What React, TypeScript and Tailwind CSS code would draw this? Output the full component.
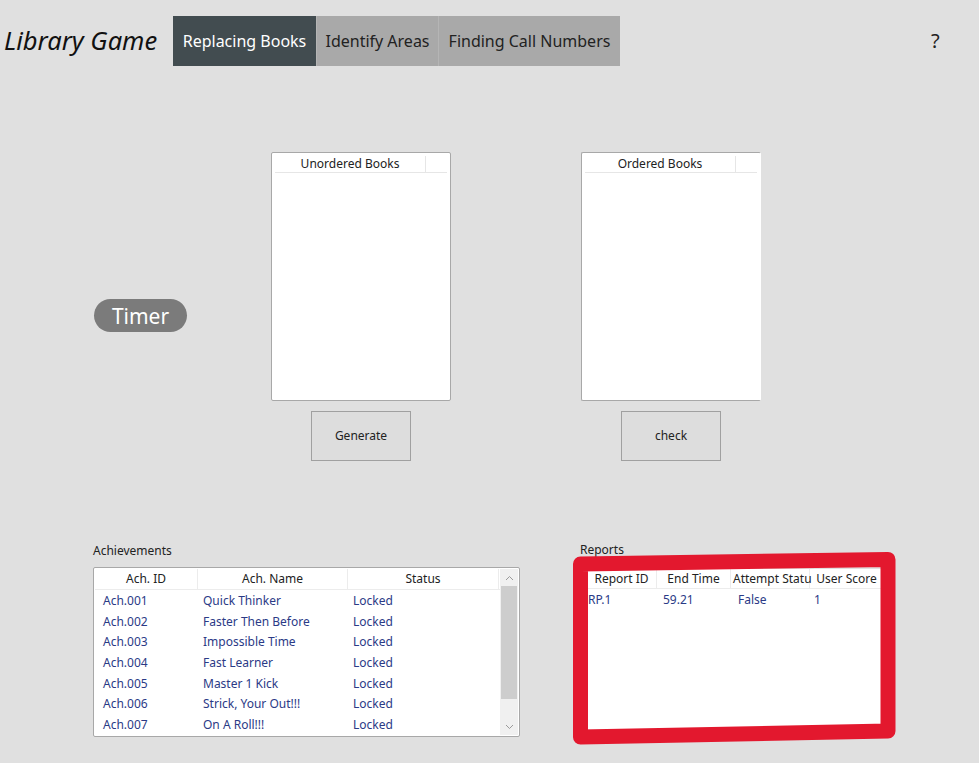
import React from "react";

const achievements = [
  ["Ach.001", "Quick Thinker", "Locked"],
  ["Ach.002", "Faster Then Before", "Locked"],
  ["Ach.003", "Impossible Time", "Locked"],
  ["Ach.004", "Fast Learner", "Locked"],
  ["Ach.005", "Master 1 Kick", "Locked"],
  ["Ach.006", "Strick, Your Out!!!", "Locked"],
  ["Ach.007", "On A Roll!!!", "Locked"],
];

function BookList({ title, open }: { title: string; open?: boolean }) {
  return (
    <div
      className={`w-[180px] h-[249px] bg-white border border-[#a8a8a8] rounded-[2px] p-[3px] ${
        open ? "border-r-white" : ""
      }`}
    >
      <div className="flex h-[17px] border-b border-[#e6e6e6] text-[12px] text-[#222]">
        <div className="w-[151px] border-r border-[#e6e6e6] flex items-center justify-center">{title}</div>
        <div className="flex-1" />
      </div>
    </div>
  );
}

function Button({ label }: { label: string }) {
  return (
    <button className="w-[100px] h-[50px] bg-[#dddddd] border border-[#a0a0a0] text-[12px] text-[#222]">
      {label}
    </button>
  );
}

export default function App() {
  return (
    <div
      className="relative w-[979px] h-[763px] overflow-hidden bg-[#e0e0e0] text-[#222]"
      style={{ fontFamily: '"Segoe UI", "Noto Sans", sans-serif' }}
    >
      {/* header */}
      <div className="flex items-center h-[50px] mt-[16px]">
        <div className="w-[173px] pl-[4px] text-[25.5px] italic text-[#111] leading-none">Library Game</div>
        <div className="flex h-[50px] text-[16px]">
          <div className="w-[143px] bg-[#424c50] text-white flex items-center justify-center">Replacing Books</div>
          <div className="w-[122px] bg-[#a9a9a9] border-l border-[#b5b5b5] text-[#222] flex items-center justify-center">Identify Areas</div>
          <div className="w-[182px] bg-[#a9a9a9] border-l border-[#b5b5b5] text-[#222] flex items-center justify-center">Finding Call Numbers</div>
        </div>
        <div className="ml-[311px] text-[20px] text-[#222]">?</div>
      </div>

      {/* game area */}
      <div className="flex items-start mt-[86px] ml-[94px]">
        <div className="mt-[147px] w-[93px] h-[33px] rounded-full bg-[#7b7b7b] text-white text-[21px] flex items-center justify-center pt-[2px]">
          Timer
        </div>
        <div className="ml-[84px] flex flex-col items-center gap-[10px]">
          <BookList title="Unordered Books" />
          <Button label="Generate" />
        </div>
        <div className="ml-[130px] flex flex-col items-center gap-[10px]">
          <BookList title="Ordered Books" open />
          <Button label="check" />
        </div>
      </div>

      {/* bottom */}
      <div className="flex items-start mt-[82px] ml-[93px]">
        <div className="flex flex-col">
          <div className="text-[12px] h-[24px] leading-[15px]">Achievements</div>
          <div className="w-[427px] h-[170px] bg-white border border-[#a8a8a8] rounded-[2px] flex p-[1px]">
            <div className="flex-1 flex flex-col">
              <div className="flex h-[21px] border-b border-[#ececec] text-[12px] text-[#222]">
                <div className="w-[103px] border-r border-[#ececec] flex items-center justify-center">Ach. ID</div>
                <div className="w-[150px] border-r border-[#ececec] flex items-center justify-center">Ach. Name</div>
                <div className="w-[151px] border-r border-[#ececec] flex items-center justify-center">Status</div>
              </div>
              {achievements.map((r) => (
                <div key={r[0]} className="flex h-[20.8px] items-center text-[12px] text-[#2b3a86] pt-[1px]">
                  <div className="w-[103px] pl-[8px]">{r[0]}</div>
                  <div className="w-[150px] pl-[5px]">{r[1]}</div>
                  <div className="w-[151px] pl-[5px]">{r[2]}</div>
                </div>
              ))}
            </div>
            <div className="w-[18px] bg-[#f0f0f0] flex flex-col items-center">
              <div className="h-[17px] flex items-center justify-center">
                <svg width="9" height="6" viewBox="0 0 9 6"><path d="M1 5 L4.5 1.5 L8 5" fill="none" stroke="#9a9a9a" strokeWidth="1" /></svg>
              </div>
              <div className="w-[16px] h-[113px] bg-[#cdcdcd]" />
              <div className="flex-1" />
              <div className="h-[17px] flex items-center justify-center">
                <svg width="9" height="6" viewBox="0 0 9 6"><path d="M1 1 L4.5 4.5 L8 1" fill="none" stroke="#9a9a9a" strokeWidth="1" /></svg>
              </div>
            </div>
          </div>
        </div>

        <div className="ml-[60px] flex flex-col">
          <div className="text-[12px] h-[23px] leading-[15px] mt-[-1px]">Reports</div>
          <div className="ml-[7px] mt-[4px] w-[296px] h-[162px] bg-white">
            <div className="flex h-[20px] border-b border-[#ececec] text-[12px] text-[#222]">
              <div className="w-[70px] border-r border-[#ececec] flex items-center justify-center">Report ID</div>
              <div className="w-[74px] border-r border-[#ececec] flex items-center justify-center">End Time</div>
              <div className="w-[79px] border-r border-[#ececec] flex items-center whitespace-nowrap pl-[2px]">Attempt Statu</div>
              <div className="flex-1 flex items-center justify-center">User Score</div>
            </div>
            <div className="flex h-[22px] items-center text-[12px] text-[#2b3a86]">
              <div className="w-[76px] pl-[1px]">RP.1</div>
              <div className="w-[75px]">59.21</div>
              <div className="w-[76px]">False</div>
              <div>1</div>
            </div>
          </div>
        </div>
      </div>

      {/* red annotation */}
      <svg className="absolute left-0 top-0 pointer-events-none" width="979" height="763" viewBox="0 0 979 763">
        <path
          d="M580.5 564 L888 559.5 L888 731 L580.5 737 Z"
          fill="none"
          stroke="#e3182e"
          strokeWidth="15"
          strokeLinejoin="round"
        />
      </svg>
    </div>
  );
}
